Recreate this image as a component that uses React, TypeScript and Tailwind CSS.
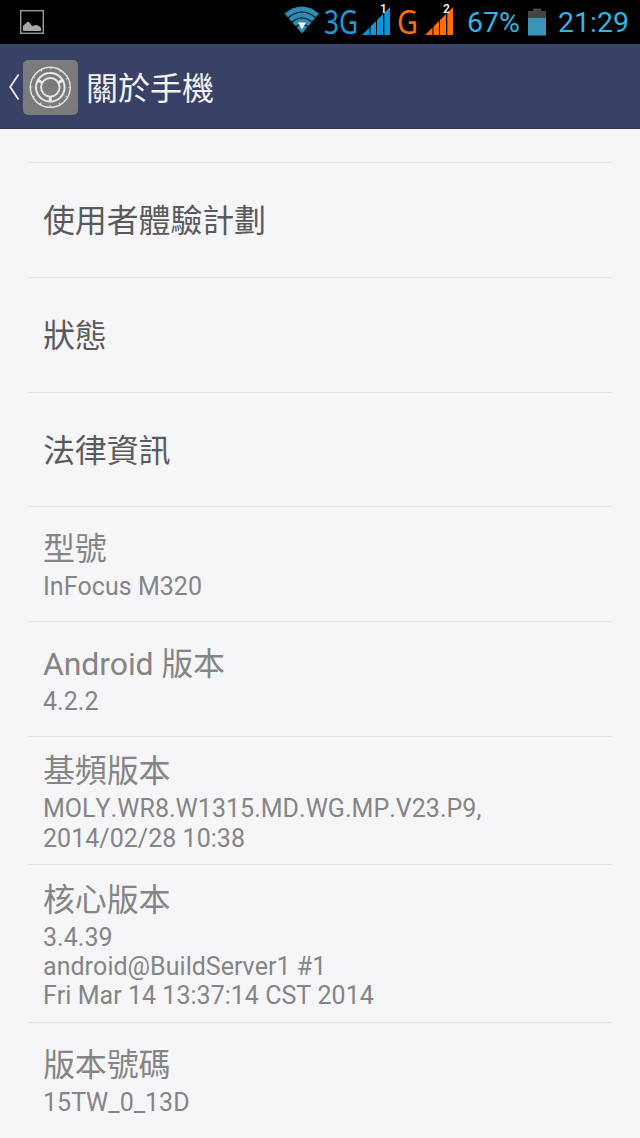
type Item = {
    title: string
    lines?: string[]
    height: string
}

const items: Item[] = [
    { title: '使用者體驗計劃', height: 'h-[115px]' },
    { title: '狀態', height: 'h-[115px]' },
    { title: '法律資訊', height: 'h-[114px]' },
    { title: '型號', lines: ['InFocus M320'], height: 'h-[115px]' },
    { title: 'Android 版本', lines: ['4.2.2'], height: 'h-[115px]' },
    { title: '基頻版本', lines: ['MOLY.WR8.W1315.MD.WG.MP.V23.P9,', '2014/02/28 10:38'], height: 'h-[128px]' },
    { title: '核心版本', lines: ['3.4.39', 'android@BuildServer1 #1', 'Fri Mar 14 13:37:14 CST 2014'], height: 'h-[158px]' },
    { title: '版本號碼', lines: ['15TW_0_13D'], height: 'h-[115px]' },
]

function PictureIcon() {
    return (
        <svg className="ml-5 h-6 w-6" viewBox="0 0 24 24">
            <rect x="0.7" y="0.7" width="22.6" height="22.6" fill="none" stroke="#999" strokeWidth="1.4" />
            <path d="M3 21v-5l2-2 2.500-2h1.500l3 4 4-1 3 1 2 2v3z" fill="#a8a8a8" />
        </svg>
    )
}

function WifiIcon() {
    return (
        <svg className="mb-[4px] h-7 w-9 shrink-0" viewBox="0 0 36 28">
            <path d="M0.500 7.500Q18 -6.500 35 7.500L18 27.500z" fill="#2a8db3" />
            <path d="M3.800 12Q18 0 32 12M7.500 16.500Q18 7.500 28.500 16.500M11.500 21Q18 15.500 24.500 21" fill="none" stroke="#000" strokeWidth="1.100" />
            <path d="M14 16.500h8L18 23.500z" fill="#fff" />
        </svg>
    )
}

function Signal({ sim, color }: { sim: string; color: string }) {
    return (
        <div className="relative mb-[2px] h-7 w-[29px] shrink-0">
            <svg className="h-7 w-[29px]" viewBox="0 0 29 28" fill={color}>
                <path d="M0 28L7.500 20.500V28zM8.500 28V19.500L14 14V28zM15 28V13L21 7V28zM22.300 28V5.700L28 0V28z" />
            </svg>
            <span className="absolute -top-[6px] left-[18px] text-[12px] leading-[16px] font-medium text-white">{sim}</span>
        </div>
    )
}

function Battery() {
    return (
        <svg className="h-7 w-[18px] shrink-0" viewBox="0 0 18 28">
            <path d="M0 3h5V0.500h8V3h5v7H0z" fill="#444" />
            <path d="M0 10h18v17.500H0z" fill="#3a96b9" />
        </svg>
    )
}

function SettingsIcon() {
    return (
        <svg className="h-[55px] w-[55px] shrink-0" viewBox="0 0 55 55">
            <rect width="55" height="55" rx="5" fill="#7b7b7b" />
            <g fill="none" stroke="#e8e8e8" transform="translate(27.3 27.300)">
                <circle r="20" strokeWidth="1.400" />
                <circle r="18.700" strokeWidth="2" strokeDasharray="0.900 8.891" strokeDashoffset="0.450" />
                <circle r="14.300" strokeWidth="2" />
                <circle r="9.300" strokeWidth="1.900" />
                <path d="M0 9v5.500M-8 -4.600L-12.400 -7.100M8 -4.600L12.400 -7.100" strokeWidth="3" />
            </g>
        </svg>
    )
}

function Row({ title, lines, height }: Item) {
    return (
        <li className={`${height} flex flex-col justify-center border-t border-[#e5e5e8] pl-[15px] whitespace-nowrap`}>
            <h2 className={`text-[32px] tracking-[-0.15px] ${lines ? 'pt-[2px] leading-[43px] text-[#858585]' : 'pt-[2px] leading-[44px] text-[#5a5a5a]'}`}>{title}</h2>
            {lines && (
                <div className="pt-px text-[25px] leading-[29.3px] tracking-[0.03px] text-[#858585]">
                    {lines.map((line) => (
                        <p key={line}>{line}</p>
                    ))}
                </div>
            )}
        </li>
    )
}

export default function App() {
    return (
        <div className="h-[1138px] w-[640px] overflow-hidden bg-[#f6f6f9] font-[Roboto,'Noto_Sans_CJK_TC',sans-serif] [font-kerning:none]">
            <div className="flex h-11 items-center bg-black text-[28.5px] text-[#33b5e5]">
                <PictureIcon />
                <div className="ml-auto flex items-center">
                    <WifiIcon />
                    <span className="ml-[4px] w-[38px] origin-left scale-x-[0.82] font-['Noto_Sans'] text-[32px] leading-[44px] text-[#1c9ade]">3G</span>
                    <Signal sim="1" color="#0d96dc" />
                    <span className="ml-[6px] w-[28px] origin-left scale-x-[0.9] font-['Noto_Sans'] text-[32px] leading-[44px] text-[#ff6c0c]">G</span>
                    <Signal sim="2" color="#ff6c0c" />
                    <span className="ml-[13px] w-[53px] pt-[2px] leading-[44px]">67%</span>
                    <span className="ml-[8px]"><Battery /></span>
                    <span className="ml-[12px] w-[82px] pt-[2px] leading-[44px]">21:29</span>
                </div>
            </div>

            <header className="flex h-[85px] items-center border-b border-[#31365a] bg-[#3a4167] pt-[2px] pl-[8px]">
                <svg className="h-[28px] w-[12px] shrink-0" viewBox="0 0 12 28" fill="none" stroke="#f3f3f3" strokeWidth="1.700">
                    <path d="M10.500 1.500L2.200 14L10.500 26.500" />
                </svg>
                <span className="ml-[3px]"><SettingsIcon /></span>
                <h1 className="ml-[8px] pt-[3px] text-[32px] leading-[44px] text-[#f3f3f3]">關於手機</h1>
            </header>

            <ul className="mx-7 mt-[33px]">
                {items.map((item) => (
                    <Row key={item.title} {...item} />
                ))}
            </ul>
        </div>
    )
}
